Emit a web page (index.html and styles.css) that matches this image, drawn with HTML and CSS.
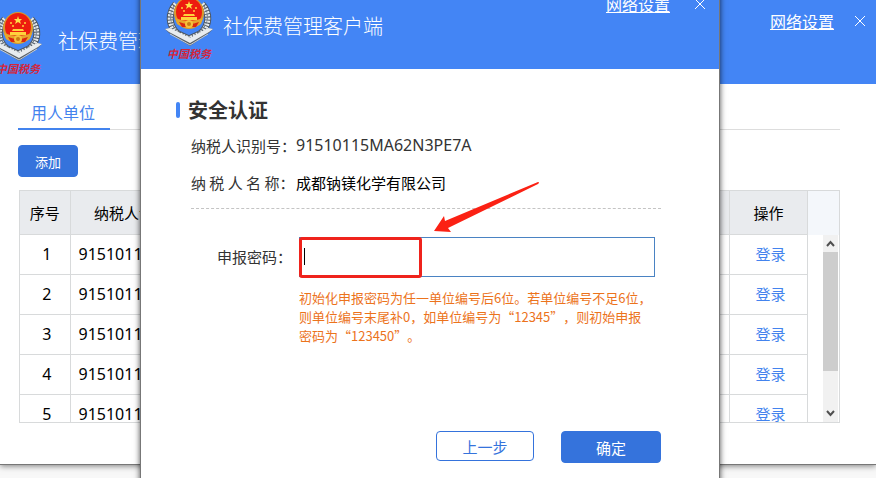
FILE: index.html
```html
<!DOCTYPE html>
<html lang="zh-CN">
<head>
  <meta charset="UTF-8">
  <meta name="viewport" content="width=device-width, initial-scale=1.0">
  <title>社保费管理客户端</title>
  <link rel="stylesheet" href="styles.css">
</head>
<body>

<!-- Shared drawings -->
<svg class="defs" aria-hidden="true">
  <symbol id="emblem" viewBox="0 0 50 52">
    <g fill="none" stroke="#4c5662" stroke-width="7">
      <path d="M12 8C4 17 4 30 14 38L25 43"/>
      <path d="M38 8c8 9 8 22-2 30L25 43"/>
    </g>
    <g fill="none" stroke="#e4e9ec" stroke-width="5" stroke-dasharray="2 1">
      <path d="M12 8C4 17 4 30 14 38L25 43"/>
      <path d="M38 8c8 9 8 22-2 30L25 43"/>
    </g>
    <g fill="none" stroke="#6d7884" stroke-width="1" stroke-dasharray="3 1">
      <path d="M10 10C4 20 6 30 16 37"/>
      <path d="M40 10c6 10 4 20-6 27"/>
    </g>
    <path d="M1 33l5-1 20 12 18-12 5 1-4 4-19 13L5 37z" fill="#59616b"/>
    <path d="M1 33l5-1 20 10 18-10 5 1-4 3-19 11L5 36z" fill="#e8ecef"/>
    <path d="M6 38l20 11 18-11" fill="none" stroke="#c3cad0" stroke-width="1"/>
    <ellipse cx="25" cy="17" rx="15" ry="16" fill="#d99a2b"/>
    <ellipse cx="25" cy="16" rx="13" ry="14" fill="#ed1c0f"/>
    <path d="M25 5l1 3h3l-2 2 1 3-3-2-3 2 1-3-2-2h3z" fill="#ffe14a"/>
    <g fill="#ffd23c">
      <circle cx="18" cy="12" r="1"/>
      <circle cx="20" cy="15" r="1"/>
      <circle cx="30" cy="15" r="1"/>
      <circle cx="32" cy="12" r="1"/>
      <path d="M20 18h10l1 2H19zM17 21h16v3H17z"/>
    </g>
    <path d="M11 22q14 6 28 0l-2 6q-12 8-24 0z" fill="#e7a62b"/>
    <path d="M15 26q10 4 20 0l-3 5H18z" fill="#d9270f"/>
    <circle cx="25" cy="28" r="4" fill="#f5c23c"/>
    <circle cx="25" cy="28" r="2" fill="#c97b14"/>
  </symbol>
  <symbol id="close" viewBox="0 0 10 10">
    <path d="M0 0l10 10M10 0L0 10" fill="none" stroke="currentColor"/>
  </symbol>
</svg>

<!-- Main window -->
<div class="window">
  <header class="header">
    <div class="logo">
      <svg class="emblem"><use href="#emblem"/></svg>
      <span class="logo-text">中国税务</span>
    </div>
    <div class="app-name">社保费管理客户端</div>
    <div class="tools">
      <a href="#">网络设置</a>
      <button class="close" aria-label="关闭"><svg><use href="#close"/></svg></button>
    </div>
  </header>

  <main class="content">
    <nav class="tabs"><a class="tab" href="#">用人单位</a></nav>
    <button class="btn btn-add">添加</button>
    <div class="list">
      <table>
        <colgroup>
          <col class="col-no">
          <col class="col-id">
          <col>
          <col class="col-action">
        </colgroup>
        <thead>
          <tr><th>序号</th><th>纳税人识别号</th><th></th><th>操作</th></tr>
        </thead>
        <tbody>
          <tr><td>1</td><td class="id">91510115</td><td></td><td><a href="#">登录</a></td></tr>
          <tr><td>2</td><td class="id">91510115</td><td></td><td><a href="#">登录</a></td></tr>
          <tr><td>3</td><td class="id">91510115</td><td></td><td><a href="#">登录</a></td></tr>
          <tr><td>4</td><td class="id">91510115</td><td></td><td><a href="#">登录</a></td></tr>
          <tr><td>5</td><td class="id">91510115</td><td></td><td><a href="#">登录</a></td></tr>
        </tbody>
      </table>
      <div class="side">
        <div class="side-head"></div>
        <div class="scrollbar">
          <svg class="arrow" viewBox="0 0 15 17"><path d="M4 11l3.500-4 3.500 4"/></svg>
          <div class="thumb"></div>
          <svg class="arrow arrow-down" viewBox="0 0 15 17"><path d="M4 6l3.500 4L11 6"/></svg>
        </div>
      </div>
    </div>
  </main>
</div>

<!-- Login dialog -->
<div class="dialog" role="dialog" aria-labelledby="dialog-title">
  <header class="header">
    <div class="logo">
      <svg class="emblem"><use href="#emblem"/></svg>
      <span class="logo-text">中国税务</span>
    </div>
    <div class="app-name">社保费管理客户端</div>
    <div class="tools">
      <a href="#">网络设置</a>
      <button class="close" aria-label="关闭"><svg><use href="#close"/></svg></button>
    </div>
  </header>

  <form class="auth">
    <h1 id="dialog-title">安全认证</h1>
    <dl class="info">
      <div class="info-row">
        <dt>纳税人识别号：</dt>
        <dd class="number">91510115MA62N3PE7A</dd>
      </div>
      <div class="info-row">
        <dt>纳 税 人 名 称：</dt>
        <dd class="company">成都钠镁化学有限公司</dd>
      </div>
    </dl>
    <div class="field">
      <label for="password">申报密码：</label>
      <div class="control">
        <input id="password" type="password">
        <span class="caret"></span>
        <span class="mark"></span>
        <svg class="pointer" viewBox="0 0 108 52"><path d="M1 50L11 35l1 5L105 1q2 0 0 2L15 47l3 4z"/></svg>
        <p class="hint">初始化申报密码为任一单位编号后6位。若单位编号不足6位，则单位编号末尾补0，如单位编号为“12345”，则初始申报密码为“123450”。</p>
      </div>
    </div>
    <div class="actions">
      <button class="btn btn-back" type="button">上一步</button>
      <button class="btn btn-ok" type="button">确定</button>
    </div>
  </form>
</div>

</body>
</html>
```
FILE: styles.css
```css
* {
  box-sizing: border-box;
}

body {
  margin: 0;
  min-height: 100vh;
  position: relative;
  overflow: hidden;
  background-color: #f8f8f8;
  color: #000;
  font-family: "Noto Sans CJK SC", "Noto Sans", sans-serif;
  font-size: 15px;
}

a {
  color: #4383ee;
  text-decoration: none;
}

button,
input {
  font-family: inherit;
}

.defs {
  position: absolute;
  width: 0;
  height: 0;
}

.window {
  background-color: #fff;
  border-bottom: 1px solid #777;
  box-shadow: 0 1px 6px rgba(0, 0, 0, 0.5);
}

/* Header, the same in both windows */
.header {
  display: flex;
  align-items: flex-start;
  height: 84px;
  padding-right: 11px;
  background-color: #4385f5;
  color: #fff;
}

.logo {
  display: flex;
  flex-direction: column;
  align-items: center;
  width: 50px;
  margin-top: 11px;
  margin-left: -7px;
}

.emblem {
  width: 50px;
  height: 52px;
}

.logo-text {
  color: #d3263a;
  font-family: "Liberation Serif", "Noto Sans CJK SC", serif;
  font-size: 11px;
  font-style: italic;
  font-weight: bold;
  line-height: 12px;
  white-space: nowrap;
}

.app-name {
  flex: 1;
  margin-left: 15px;
  font-size: 20px;
  font-weight: 300;
  line-height: 81px;
}

.tools {
  display: flex;
  align-items: center;
  gap: 21px;
  padding-top: 9px;
}

.tools a {
  color: #fff;
  font-size: 16px;
  line-height: 24px;
  text-decoration: underline;
}

.close {
  width: 10px;
  height: 10px;
  padding: 0;
  border: none;
  background: none;
  color: #fff;
  cursor: pointer;
}

.close svg {
  display: block;
  width: 10px;
  height: 10px;
}

/* Main window */
.content {
  padding: 12px 36px 41px 18px;
}

.tabs {
  display: flex;
  border-bottom: 1px solid #ddd;
}

.tab {
  margin-bottom: -1px;
  padding: 0 15px 0 13px;
  border-bottom: 2px solid #4383ee;
  font-size: 16px;
  line-height: 32px;
}

.btn {
  padding: 0;
  border: 1px solid #3573dc;
  border-radius: 4px;
  background-color: #3573dc;
  color: #fff;
  font-size: 15px;
  cursor: pointer;
}

.btn-add {
  display: block;
  width: 60px;
  height: 32px;
  margin: 15px 0 13px;
  font-size: 13px;
}

.list {
  display: flex;
  height: 233px;
  margin-left: 1px;
  border: 1px solid #d8dadb;
  overflow: hidden;
}

table {
  flex: 1;
  height: 243px;
  table-layout: fixed;
  border-collapse: collapse;
}

.col-no {
  width: 50px;
}

.col-id {
  width: 138px;
}

.col-action {
  width: 78px;
}

th,
td {
  height: 40px;
  padding: 0;
  border-right: 1px solid #d8dadb;
  border-bottom: 1px solid #d8dadb;
  text-align: center;
}

th {
  height: 43px;
  background-color: #e9ebee;
  font-weight: normal;
}

td {
  padding-left: 4px;
  font-family: "Noto Sans", "Noto Sans CJK SC", sans-serif;
  font-size: 16px;
}

td a {
  font-family: "Noto Sans CJK SC", sans-serif;
  font-size: 15px;
}

.id {
  padding-left: 8px;
  text-align: left;
}

.side {
  display: flex;
  flex-direction: column;
  width: 31px;
}

.side-head {
  height: 44px;
  background-color: #f4f7fb;
}

.scrollbar {
  display: flex;
  flex: 1;
  flex-direction: column;
  width: 15px;
  margin: 0 1px 0 auto;
  background-color: #f1f1f1;
}

.arrow {
  width: 15px;
  height: 17px;
  fill: none;
  stroke: #505050;
  stroke-width: 2;
}

.arrow-down {
  margin-top: auto;
}

.thumb {
  height: 119px;
  background-color: #cdcdcd;
}

/* Dialog */
.dialog {
  position: absolute;
  top: -16px;
  right: 156px;
  bottom: -20px;
  left: 140px;
  border: 1px solid #777;
  background-color: #fff;
  box-shadow: 0 0 6px rgba(0, 0, 0, 0.7);
}

.dialog .header {
  padding-right: 14px;
}

.dialog .logo {
  margin-left: 23px;
}

.dialog .app-name {
  margin-left: 9px;
}

.dialog .tools {
  gap: 25px;
  padding-top: 7px;
}

.auth {
  padding: 25px 58px 0 35px;
  color: #333;
}

h1 {
  display: flex;
  align-items: center;
  gap: 8px;
  margin: 0;
  font-size: 20px;
  line-height: 32px;
}

h1::before {
  content: "";
  width: 4px;
  height: 16px;
  border-radius: 2px;
  background-color: #4385f5;
}

.info {
  margin: 1px 0 28px 15px;
  padding-bottom: 7px;
  border-bottom: 1px dashed #c4c4c4;
}

.info-row {
  display: flex;
  line-height: 37px;
}

.info dt {
  width: 105px;
  white-space: nowrap;
}

.info dd {
  margin: 0;
}

.number {
  font-family: "Noto Sans", sans-serif;
  font-size: 16px;
}

.company {
  color: #000;
}

.field {
  display: flex;
  margin: 0 6px 0 41px;
}

.field label {
  width: 82px;
  line-height: 40px;
}

.control {
  flex: 1;
  position: relative;
}

.control input {
  display: block;
  width: 100%;
  height: 40px;
  padding: 0 5px;
  border: 1px solid #4a83c3;
  background-color: #fff;
  font-size: 15px;
}

.caret {
  position: absolute;
  top: 11px;
  left: 5px;
  width: 1px;
  height: 17px;
  background-color: #000;
}

.mark {
  position: absolute;
  top: 0;
  left: 0;
  width: 123px;
  height: 41px;
  border: 3px solid #ef231c;
  border-radius: 3px;
}

.pointer {
  position: absolute;
  top: -56px;
  left: 134px;
  width: 108px;
  height: 52px;
  fill: #fb2114;
}

.hint {
  margin: 11px 0 0;
  padding-right: 2px;
  color: #ec731c;
  font-size: 13px;
  line-height: 19px;
  text-spacing-trim: space-all;
}

.actions {
  display: flex;
  justify-content: flex-end;
  align-items: flex-start;
  gap: 27px;
  margin-top: 86px;
}

.btn-back {
  width: 98px;
  height: 30px;
  background-color: #fff;
  color: #3573dc;
}

.btn-ok {
  width: 100px;
  height: 32px;
}
```
